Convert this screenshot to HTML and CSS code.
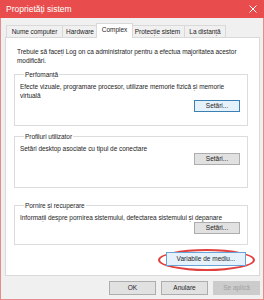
FILE: index.html
```html
<!DOCTYPE html>
<html lang="ro">
<head>
  <meta charset="UTF-8" />
  <title>Proprietăți sistem</title>
  <link rel="stylesheet" href="styles.css">
</head>
<body>
  <div class="window">
    <div class="titlebar">
      <span class="title">Proprietăți sistem</span>
      <svg class="close" width="8" height="8" viewBox="0 0 8 8">
        <path d="M0.5 0.5 L7.5 7.5 M7.5 0.5 L0.5 7.5" stroke="#fff" stroke-width="1" fill="none"/>
      </svg>
    </div>

    <div class="content">
      <div class="tabs">
        <div class="tab tab-name">Nume computer</div>
        <div class="tab tab-hw">Hardware</div>
        <div class="tab tab-active">Complex</div>
        <div class="tab tab-prot">Protecție sistem</div>
        <div class="tab tab-dist">La distanță</div>
      </div>

      <div class="panel">
        <p class="intro">Trebuie să faceți Log on ca administrator pentru a efectua majoritatea acestor modificări.</p>

        <fieldset class="group">
          <legend>Perfomanță</legend>
          <p class="group-text">Efecte vizuale, programare procesor, utilizare memorie fizică și memorie virtuală</p>
          <div class="group-actions"><button class="btn btn-default">Setări...</button></div>
        </fieldset>

        <fieldset class="group">
          <legend>Profiluri utilizator</legend>
          <p class="group-text">Setări desktop asociate cu tipul de conectare</p>
          <div class="group-actions"><button class="btn">Setări...</button></div>
        </fieldset>

        <fieldset class="group group-last">
          <legend>Pornire și recuperare</legend>
          <p class="group-text">Informații despre pornirea sistemului, defectarea sistemului și depanare</p>
          <div class="group-actions"><button class="btn">Setări...</button></div>
        </fieldset>

        <div class="env-row">
          <span class="highlight"><button class="btn btn-env">Variabile de mediu...</button></span>
        </div>
      </div>

      <div class="footer">
        <button class="btn btn-foot">OK</button>
        <button class="btn btn-foot">Anulare</button>
        <button class="btn btn-foot btn-disabled">Se aplică</button>
      </div>
    </div>
  </div>
</body>
</html>
```

FILE: styles.css
```css
* {
  box-sizing: border-box;
}
body {
  margin: 0;
  width: 264px;
  height: 300px;
  font-family: "Liberation Sans", Arial, sans-serif;
  font-size: 6.5px;
  letter-spacing: -0.05px;
  color: #1e1e1e;
  background: #fff;
}
.window {
  width: 264px;
  height: 300px;
  border: 1px solid #e98a8a;
  border-top: none;
  background: #f0f0f0;
  display: flex;
  flex-direction: column;
}
.titlebar {
  height: 18px;
  margin: 0 -1px;
  background: #e84c4c;
  color: #fff;
  display: flex;
  align-items: center;
  justify-content: space-between;
  padding: 0 7px 0 6px;
  font-size: 8.5px;
  letter-spacing: 0;
}
.content {
  flex: 1;
  padding: 7px 3px 0 4px;
  display: flex;
  flex-direction: column;
}
.tabs {
  display: flex;
  align-items: flex-end;
  height: 12px;
  padding-left: 1px;
  position: relative;
  z-index: 1;
}
.tab {
  height: 12px;
  border: 1px solid #d9d9d9;
  border-bottom: none;
  margin-left: -1px;
  background: #f0f0f0;
  line-height: 11px;
  text-align: center;
  white-space: nowrap;
}
.tab-name { width: 57px; margin-left: 0; }
.tab-hw { width: 36px; }
.tab-active {
  width: 37px;
  height: 15px;
  margin-left: -2px;
  margin-right: -2px;
  margin-bottom: -1px;
  background: #fff;
  line-height: 11px;
  position: relative;
  z-index: 2;
}
.tab-prot { width: 55px; }
.tab-dist { width: 42px; }
.panel {
  height: 239px;
  background: #fff;
  border: 1px solid #d9d9d9;
  padding: 9px 11px 0 8px;
  display: flex;
  flex-direction: column;
}
.intro {
  margin: 0 0 5px 3px;
  line-height: 9px;
}
.group {
  margin: 0 0 6px 0;
  padding: 3px 7px 7px 5px;
  border: 1px solid #dcdcdc;
  min-height: 56px;
  display: flex;
  flex-direction: column;
}
.group-last {
  margin-top: 7px;
  margin-bottom: 0;
  min-height: 44px;
}
.group legend {
  padding: 0 1px;
  margin-left: 4px;
  line-height: 9px;
}
.group-text {
  margin: 0;
  line-height: 9px;
  flex: 1;
}
.group-actions {
  display: flex;
  justify-content: flex-end;
}
.btn {
  font-family: "Liberation Sans", Arial, sans-serif;
  font-size: 6.5px;
  color: #1e1e1e;
  background: #e1e1e1;
  border: 1px solid #adadad;
  height: 12px;
  padding: 0;
  line-height: 10px;
  border-radius: 0;
}
.group-actions .btn {
  width: 46px;
}
.btn-default {
  border-color: #3c7fb1;
  background: #e5f1fb;
}
.env-row {
  display: flex;
  justify-content: flex-end;
  margin: 4px -7px 0 0;
}
.highlight {
  border: 2px solid #e0413f;
  border-radius: 50%;
  padding: 1px 7px 3px 6px;
  display: inline-flex;
}
.btn-env {
  width: 80px;
  height: 14px;
  border-color: #6aa3d6;
  background: #e5f1fb;
}
.footer {
  display: flex;
  justify-content: flex-end;
  gap: 5px;
  padding-top: 5px;
}
.btn-foot {
  width: 47px;
  height: 14px;
}
.btn-disabled {
  color: #a0a0a0;
  border-color: #cccccc;
  background: #cccccc;
}
```
